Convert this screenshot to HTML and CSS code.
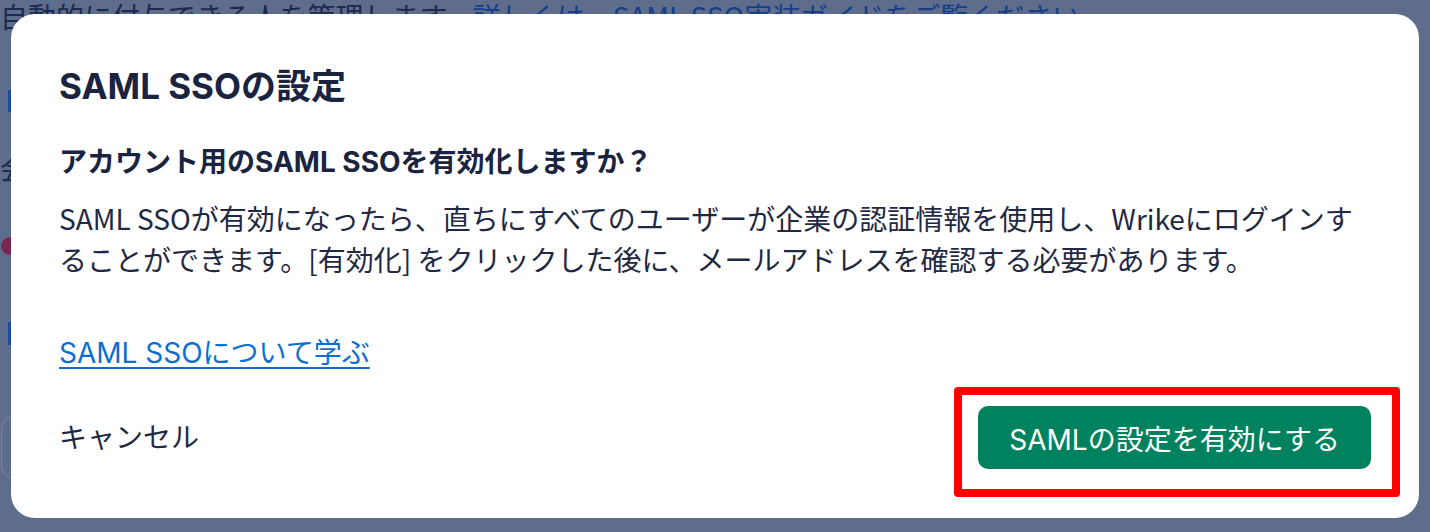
FILE: index.html
```html
<!DOCTYPE html>
<html lang="ja">
<head>
<meta charset="utf-8">
<title>SAML SSOの設定</title>
<link rel="stylesheet" href="styles.css">
</head>
<body>
  <div class="page">
    <p class="intro">自動的に付与できる人を管理します。<a class="intro-link" href="#">詳しくは、SAML SSO実装ガイドをご覧ください</a></p>
    <span class="page-bar page-bar-1"></span>
    <p class="page-label">会社</p>
    <span class="page-dot"></span>
    <span class="page-bar page-bar-2"></span>
    <div class="page-box"></div>
  </div>

  <div class="backdrop">
    <div class="modal" role="dialog" aria-labelledby="modal-title">
      <h2 class="modal-title" id="modal-title">SAML SSOの設定</h2>
      <h3 class="modal-subtitle">アカウント用のSAML SSOを有効化しますか？</h3>
      <p class="modal-text">SAML SSOが有効になったら、直ちにすべてのユーザーが企業の認証情報を使用し、Wrikeにログインすることができます。[有効化] をクリックした後に、メールアドレスを確認する必要があります。</p>
      <p class="modal-learn"><a class="modal-link" href="#">SAML SSOについて学ぶ</a></p>
      <div class="modal-footer">
        <button class="btn-cancel" type="button">キャンセル</button>
        <div class="primary-wrap">
          <button class="btn-primary" type="button">SAMLの設定を有効にする</button>
          <span class="highlight"></span>
        </div>
      </div>
    </div>
  </div>
</body>
</html>
```

FILE: styles.css
```css
html, body {
  margin: 0;
  padding: 0;
}

body {
  width: 1430px;
  height: 532px;
  overflow: hidden;
  background: #5f6d8c;
  font-family: "Inter", "Noto Sans CJK JP", sans-serif;
}

/* dimmed page behind the dialog */
.page {
  display: flex;
  flex-direction: column;
  align-items: flex-start;
}

.intro {
  margin: 0;
  font-family: "Noto Sans CJK JP", sans-serif;
  font-size: 28px;
  line-height: 32px;
  color: #1c2a4e;
  white-space: nowrap;
}

.intro-link {
  color: #143f88;
  text-decoration: none;
}

.page-bar {
  display: block;
  width: 4px;
  margin-left: 8px;
  background: #1d4c9c;
}

.page-bar-1 {
  margin-top: 58px;
  height: 22px;
}

.page-label {
  margin: 42px 0 0 0;
  font-family: "Noto Sans CJK JP", sans-serif;
  font-size: 28px;
  line-height: 28px;
  color: #1c2a4e;
}

.page-dot {
  display: block;
  width: 18px;
  height: 18px;
  margin-top: 55px;
  margin-left: 1px;
  border-radius: 50%;
  background: #7b2552;
}

.page-bar-2 {
  margin-top: 67px;
  height: 23px;
}

.page-box {
  margin-top: 70px;
  margin-left: 1px;
  width: 200px;
  height: 62px;
  border: 1px solid #7884a2;
  border-radius: 14px;
}

/* dialog */
.backdrop {
  position: fixed;
  inset: 0;
  display: flex;
  align-items: center;
  justify-content: center;
}

.modal {
  box-sizing: border-box;
  width: 1408px;
  padding: 48px 48px 49px;
  background: #ffffff;
  border-radius: 24px;
  color: #1b2541;
}

.modal-title {
  margin: 0;
  font-size: 35px;
  line-height: 48px;
  font-weight: 700;
  color: #1a2340;
}

.modal-subtitle {
  margin: 32px 0 0;
  font-size: 28px;
  line-height: 40px;
  font-weight: 700;
  color: #1a2340;
}

.modal-text {
  margin: 16px 0 0;
  font-family: "Noto Sans CJK JP", sans-serif;
  font-size: 28px;
  line-height: 41px;
  color: #1f2943;
}

.modal-learn {
  margin: 53px 0 0;
  font-size: 28px;
  line-height: 40px;
}

.modal-link {
  color: #0b6fd2;
  text-decoration: underline;
  text-decoration-thickness: 2px;
  text-underline-offset: 4px;
}

.modal-footer {
  margin-top: 33px;
  display: flex;
  align-items: center;
  justify-content: space-between;
}

.btn-cancel {
  padding: 0;
  border: none;
  background: none;
  font-family: "Inter", "Noto Sans CJK JP", sans-serif;
  font-size: 28px;
  line-height: 40px;
  color: #1f2943;
  cursor: pointer;
}

.primary-wrap {
  position: relative;
  display: flex;
}

.btn-primary {
  height: 63px;
  padding: 0 31px;
  border: none;
  border-radius: 10px;
  background: #01825f;
  color: #ffffff;
  font-family: "Inter", "Noto Sans CJK JP", sans-serif;
  font-size: 28px;
  font-weight: 400;
  cursor: pointer;
}

/* red annotation frame around the primary action */
.highlight {
  position: absolute;
  left: -24px;
  top: -19px;
  width: 446px;
  height: 110px;
  box-sizing: border-box;
  border: 8px solid #ff0000;
  border-radius: 4px;
  pointer-events: none;
}
```
